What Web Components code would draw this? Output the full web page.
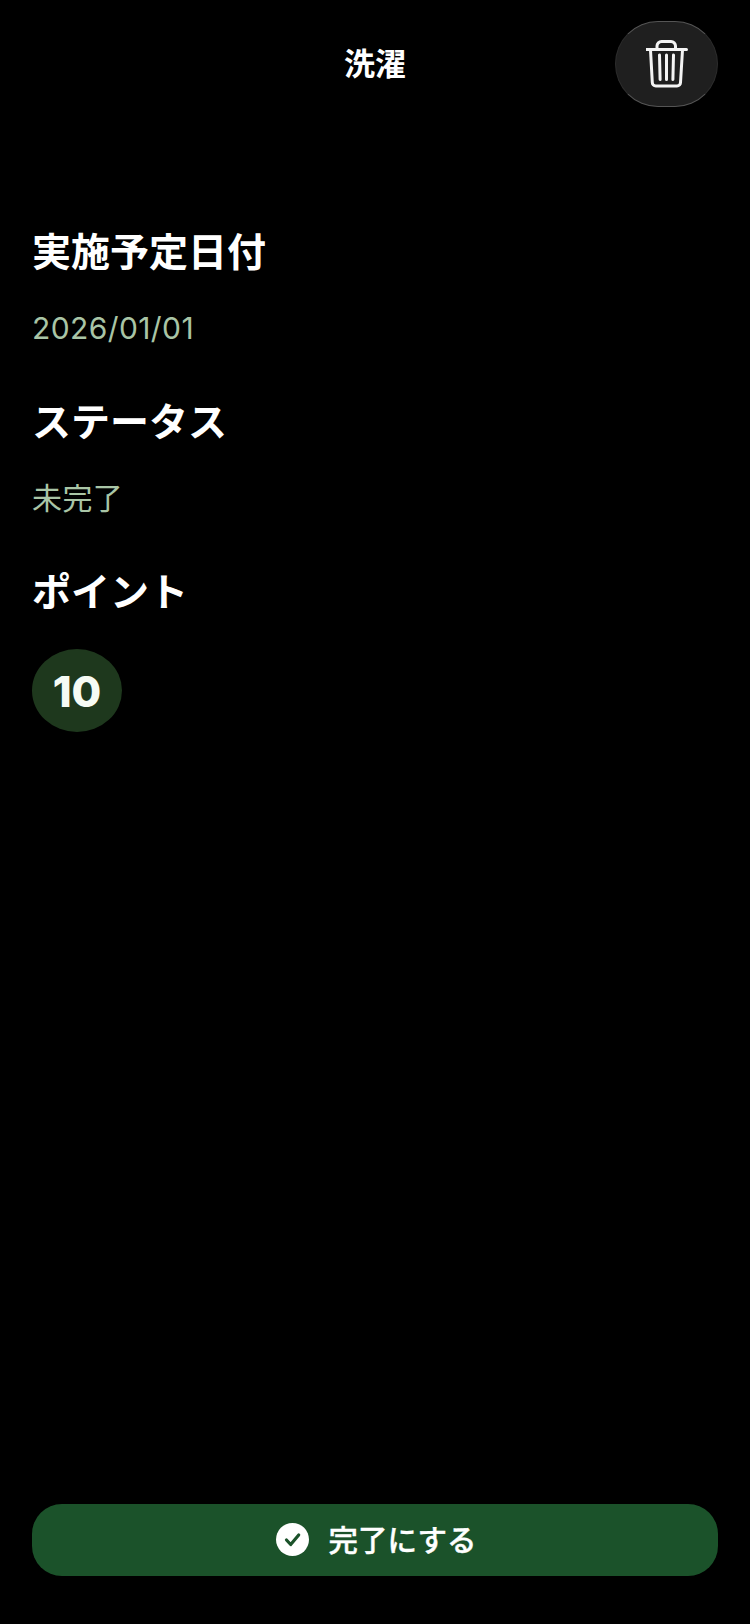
<!DOCTYPE html>
<html lang="ja">
<head>
<meta charset="utf-8">
<title>洗濯</title>
<style>
  html, body { margin: 0; background: #000; }
  body { font-family: "Noto Sans CJK JP", "Liberation Sans", sans-serif; color: #fff; }
</style>
</head>
<body>
<task-page>
  <task-header slot="header" title-text="洗濯"></task-header>
  <task-field label="実施予定日付">2026/01/01</task-field>
  <task-field label="ステータス">未完了</task-field>
  <task-field label="ポイント"><point-badge>10</point-badge></task-field>
  <done-button slot="footer">完了にする</done-button>
</task-page>

<script>
// Contenedor de la pantalla completa.
class TaskPage extends HTMLElement {
    constructor() {
        super();
        this.attachShadow({ mode: 'open' });
    }

    connectedCallback() {
        this.shadowRoot.innerHTML = `
            <style>
                :host { display: flex; flex-direction: column; height: 1624px; box-sizing: border-box; padding: 21px 32px 48px; overflow: hidden; }
                main { flex: 1; display: flex; flex-direction: column; padding-top: 114px; }
            </style>
            <slot name="header"></slot>
            <main><slot></slot></main>
            <slot name="footer"></slot>
        `;
    }
}

// Barra superior con el título y el botón de borrar.
class TaskHeader extends HTMLElement {
    constructor() {
        super();
        this.attachShadow({ mode: 'open' });
    }

    connectedCallback() {
        this.shadowRoot.innerHTML = `
            <style>
                :host { display: grid; grid-template-columns: 103px 1fr 103px; height: 86px; }
                h1 { grid-column: 2; margin: 0; text-align: center; font-size: 31px; line-height: 82px; font-weight: 700; color: #fff; }
                button { grid-column: 3; width: 103px; height: 86px; padding: 0; display: flex; align-items: center; justify-content: center; background: #1f1f1f; border: 1px solid #2c2c2c; border-top-color: #555; border-bottom-color: #555; border-radius: 43px; box-sizing: border-box; }
                svg { width: 42px; height: 48px; display: block; }
            </style>
            <h1>${this.getAttribute('title-text')}</h1>
            <button aria-label="削除">
                <svg viewBox="0 0 42 48" fill="none" stroke="#f4f4f4" stroke-width="3" stroke-linecap="round" stroke-linejoin="round">
                    <path d="M0.500 9.500H40.500"/>
                    <path d="M11 9V6a4.500 4.500 0 0 1 4.500-4.500h9.500a4.500 4.500 0 0 1 4.500 4.500V9"/>
                    <path d="M4.500 10l1.800 32.500a3.500 3.500 0 0 0 3.500 3.500H31a3.500 3.500 0 0 0 3.500-3.500L36.500 10"/>
                    <path d="M13.500 15l.6 24.500M20.500 15V39.500M27.500 15l-.6 24.500"/>
                </svg>
            </button>
        `;
    }
}

// Bloque de etiqueta en negrita y valor en verde claro.
class TaskField extends HTMLElement {
    constructor() {
        super();
        this.attachShadow({ mode: 'open' });
    }

    connectedCallback() {
        this.shadowRoot.innerHTML = `
            <style>
                :host { display: block; height: 170px; }
                h2 { margin: 0; font-size: 39px; line-height: 56px; font-weight: 700; color: #fff; }
                div { margin-top: 28px; font-size: 30px; line-height: 46px; letter-spacing: 0.4px; color: #a9c5a6; font-family: Inter, "Noto Sans CJK JP", sans-serif; }
            </style>
            <h2>${this.getAttribute('label')}</h2>
            <div><slot></slot></div>
        `;
    }
}

// Insignia redonda con los puntos.
class PointBadge extends HTMLElement {
    constructor() {
        super();
        this.attachShadow({ mode: 'open' });
    }

    connectedCallback() {
        this.shadowRoot.innerHTML = `
            <style>
                :host { display: flex; align-items: center; justify-content: center; width: 90px; height: 83px; margin-top: 32px; border-radius: 50%; background: #1e381d; color: #f6fbf4; font-family: Inter, "Liberation Sans", sans-serif; font-size: 43px; font-weight: 800; letter-spacing: 0; }
            </style>
            <slot></slot>
        `;
    }
}

// Botón inferior de completar.
class DoneButton extends HTMLElement {
    constructor() {
        super();
        this.attachShadow({ mode: 'open' });
    }

    connectedCallback() {
        this.shadowRoot.innerHTML = `
            <style>
                :host { display: flex; align-items: center; justify-content: center; gap: 20px; height: 72px; padding-left: 2px; border-radius: 30px; background: #1b522a; color: #fff; font-size: 29.500px; font-weight: 500; -webkit-text-stroke: 0.4px #fff; }
                svg { width: 33px; height: 33px; display: block; margin-bottom: 1px; }
                span { padding-bottom: 5px; }
            </style>
            <svg viewBox="0 0 33 33">
                <circle cx="16.500" cy="16.500" r="16.500" fill="#fff"/>
                <path d="M10.500 17l4.200 4.500 8-9.500" fill="none" stroke="#1b522a" stroke-width="3.200" stroke-linecap="round" stroke-linejoin="round"/>
            </svg>
            <span><slot></slot></span>
        `;
    }
}

customElements.define('task-page', TaskPage);
customElements.define('task-header', TaskHeader);
customElements.define('task-field', TaskField);
customElements.define('point-badge', PointBadge);
customElements.define('done-button', DoneButton);
</script>
</body>
</html>
